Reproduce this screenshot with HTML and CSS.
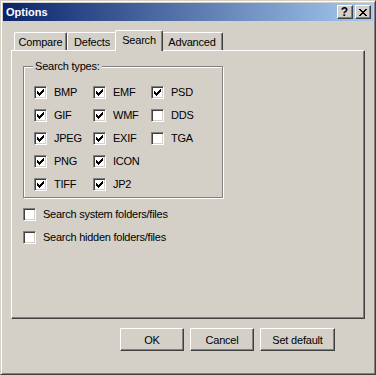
FILE: index.html
```html
<!DOCTYPE html>
<html lang="en">
<head>
    <meta charset="UTF-8">
    <title>Options</title>
    <link rel="stylesheet" href="styles.css">
</head>
<body>
    <div class="window">
        <div class="titlebar">
            <span class="title">Options</span>
            <div class="caption-btns">
                <span class="cap-btn help">?</span>
                <span class="cap-btn close">
                    <svg width="8" height="7" viewBox="0 0 8 7" shape-rendering="crispEdges">
                        <path d="M0 0h2v1h-2z M6 0h2v1h-2z M1 1h2v1h-2z M5 1h2v1h-2z M2 2h4v1h-4z M3 3h2v1h-2z M2 4h4v1h-4z M1 5h2v1h-2z M5 5h2v1h-2z M0 6h2v1h-2z M6 6h2v1h-2z" fill="#000"/>
                    </svg>
                </span>
            </div>
        </div>

        <div class="client">
            <div class="tabs">
                <div class="tab tab-compare">Compare</div>
                <div class="tab tab-defects">Defects</div>
                <div class="tab tab-search active">Search</div>
                <div class="tab tab-advanced">Advanced</div>
            </div>

            <div class="panel">
                <div class="group">
                    <div class="legend">Search types:</div>
                    <div class="types">
                        <label class="check"><span class="box checked"><svg width="11" height="11" viewBox="0 0 11 11" shape-rendering="crispEdges"><path d="M2 4h1v3h-1z M3 5h1v3h-1z M4 6h1v3h-1z M5 5h1v3h-1z M6 4h1v3h-1z M7 3h1v3h-1z M8 2h1v3h-1z"/></svg></span>BMP</label>
                        <label class="check"><span class="box checked"><svg width="11" height="11" viewBox="0 0 11 11" shape-rendering="crispEdges"><path d="M2 4h1v3h-1z M3 5h1v3h-1z M4 6h1v3h-1z M5 5h1v3h-1z M6 4h1v3h-1z M7 3h1v3h-1z M8 2h1v3h-1z"/></svg></span>GIF</label>
                        <label class="check"><span class="box checked"><svg width="11" height="11" viewBox="0 0 11 11" shape-rendering="crispEdges"><path d="M2 4h1v3h-1z M3 5h1v3h-1z M4 6h1v3h-1z M5 5h1v3h-1z M6 4h1v3h-1z M7 3h1v3h-1z M8 2h1v3h-1z"/></svg></span>JPEG</label>
                        <label class="check"><span class="box checked"><svg width="11" height="11" viewBox="0 0 11 11" shape-rendering="crispEdges"><path d="M2 4h1v3h-1z M3 5h1v3h-1z M4 6h1v3h-1z M5 5h1v3h-1z M6 4h1v3h-1z M7 3h1v3h-1z M8 2h1v3h-1z"/></svg></span>PNG</label>
                        <label class="check"><span class="box checked"><svg width="11" height="11" viewBox="0 0 11 11" shape-rendering="crispEdges"><path d="M2 4h1v3h-1z M3 5h1v3h-1z M4 6h1v3h-1z M5 5h1v3h-1z M6 4h1v3h-1z M7 3h1v3h-1z M8 2h1v3h-1z"/></svg></span>TIFF</label>

                        <label class="check"><span class="box checked"><svg width="11" height="11" viewBox="0 0 11 11" shape-rendering="crispEdges"><path d="M2 4h1v3h-1z M3 5h1v3h-1z M4 6h1v3h-1z M5 5h1v3h-1z M6 4h1v3h-1z M7 3h1v3h-1z M8 2h1v3h-1z"/></svg></span>EMF</label>
                        <label class="check"><span class="box checked"><svg width="11" height="11" viewBox="0 0 11 11" shape-rendering="crispEdges"><path d="M2 4h1v3h-1z M3 5h1v3h-1z M4 6h1v3h-1z M5 5h1v3h-1z M6 4h1v3h-1z M7 3h1v3h-1z M8 2h1v3h-1z"/></svg></span>WMF</label>
                        <label class="check"><span class="box checked"><svg width="11" height="11" viewBox="0 0 11 11" shape-rendering="crispEdges"><path d="M2 4h1v3h-1z M3 5h1v3h-1z M4 6h1v3h-1z M5 5h1v3h-1z M6 4h1v3h-1z M7 3h1v3h-1z M8 2h1v3h-1z"/></svg></span>EXIF</label>
                        <label class="check"><span class="box checked"><svg width="11" height="11" viewBox="0 0 11 11" shape-rendering="crispEdges"><path d="M2 4h1v3h-1z M3 5h1v3h-1z M4 6h1v3h-1z M5 5h1v3h-1z M6 4h1v3h-1z M7 3h1v3h-1z M8 2h1v3h-1z"/></svg></span>ICON</label>
                        <label class="check"><span class="box checked"><svg width="11" height="11" viewBox="0 0 11 11" shape-rendering="crispEdges"><path d="M2 4h1v3h-1z M3 5h1v3h-1z M4 6h1v3h-1z M5 5h1v3h-1z M6 4h1v3h-1z M7 3h1v3h-1z M8 2h1v3h-1z"/></svg></span>JP2</label>

                        <label class="check"><span class="box checked"><svg width="11" height="11" viewBox="0 0 11 11" shape-rendering="crispEdges"><path d="M2 4h1v3h-1z M3 5h1v3h-1z M4 6h1v3h-1z M5 5h1v3h-1z M6 4h1v3h-1z M7 3h1v3h-1z M8 2h1v3h-1z"/></svg></span>PSD</label>
                        <label class="check"><span class="box"></span>DDS</label>
                        <label class="check"><span class="box"></span>TGA</label>
                    </div>
                </div>

                <div class="options">
                    <label class="check"><span class="box"></span>Search system folders/files</label>
                    <label class="check"><span class="box"></span>Search hidden folders/files</label>
                </div>
            </div>

            <div class="buttons">
                <button class="btn btn-ok">OK</button>
                <button class="btn btn-cancel">Cancel</button>
                <button class="btn btn-default">Set default</button>
            </div>
        </div>
    </div>
</body>
</html>
```

FILE: styles.css
```css
body {
    margin: 0;
    padding: 0;
    font-family: "Liberation Sans", Arial, sans-serif;
    font-size: 11px;
    color: #000;
    background-color: #d4d0c8;
}

.window {
    width: 376px;
    height: 375px;
    box-sizing: border-box;
    background-color: #d4d0c8;
    border: 1px solid;
    border-color: #d4d0c8 #404040 #404040 #d4d0c8;
    box-shadow: inset 1px 1px 0 #fff, inset -1px -1px 0 #808080;
    padding: 2px;
}

.titlebar {
    height: 18px;
    display: flex;
    align-items: center;
    justify-content: space-between;
    padding: 0 2px 0 3px;
    background: linear-gradient(to right, #0a246a, #a6caf0);
}

    .titlebar .title {
        color: #fff;
        font-weight: bold;
        font-size: 11px;
    }

.caption-btns {
    display: flex;
    gap: 2px;
}

.cap-btn {
    width: 16px;
    height: 14px;
    box-sizing: border-box;
    display: flex;
    align-items: center;
    justify-content: center;
    background-color: #d4d0c8;
    border: 1px solid;
    border-color: #fff #404040 #404040 #fff;
    box-shadow: inset -1px -1px 0 #808080;
}

    .cap-btn.help {
        font-weight: bold;
        font-size: 12px;
        line-height: 12px;
        padding-right: 1px;
    }

    .cap-btn svg {
        display: block;
        margin-right: 1px;
    }

.client {
    padding: 9px 8px 0 8px;
}

.tabs {
    display: flex;
    align-items: flex-end;
    height: 20px;
    padding-left: 3px;
}

.tab {
    height: 18px;
    box-sizing: border-box;
    display: flex;
    align-items: center;
    justify-content: center;
    letter-spacing: -0.2px;
    background-color: #d4d0c8;
    border: 1px solid;
    border-bottom: none;
    border-color: #fff #404040 #404040 #fff;
    border-radius: 2px 2px 0 0;
    box-shadow: inset -1px 0 0 #808080;
    padding-top: 1px;
}

    .tab.active {
        height: 21px;
        margin: 0 -2px -1px -2px;
        position: relative;
        z-index: 1;
        padding-bottom: 3px;
    }

.tab-compare { width: 53px; }
.tab-defects { width: 50px; }
.tab-search { width: 48px; }
.tab-advanced { width: 62px; }

.panel {
    height: 269px;
    box-sizing: border-box;
    border: 1px solid;
    border-color: #fff #404040 #404040 #fff;
    box-shadow: inset -1px -1px 0 #808080;
    padding: 15px 0 0 11px;
}

.group {
    width: 200px;
    box-sizing: border-box;
    border: 1px solid #808080;
    box-shadow: inset 1px 1px 0 #fff, 1px 1px 0 #fff;
    padding-bottom: 6px;
}

    .group .legend {
        width: fit-content;
        margin: -7px 0 0 9px;
        padding: 0 2px;
        line-height: 13px;
        letter-spacing: -0.2px;
        background-color: #d4d0c8;
    }

.types {
    display: grid;
    grid-auto-flow: column;
    grid-template-rows: repeat(5, 13px);
    grid-template-columns: 59px 58px auto;
    row-gap: 10px;
    margin-top: 13px;
    padding-left: 10px;
}

.check {
    display: flex;
    align-items: center;
    gap: 7px;
    height: 13px;
    line-height: 13px;
    letter-spacing: -0.25px;
}

.box {
    width: 13px;
    height: 13px;
    flex: none;
    box-sizing: border-box;
    background-color: #fff;
    border: 1px solid;
    border-color: #808080 #fff #fff #808080;
    box-shadow: inset 1px 1px 0 #404040, inset -1px -1px 0 #d4d0c8;
}

    .box svg {
        display: block;
        fill: #000;
    }

.options {
    display: flex;
    flex-direction: column;
    gap: 10px;
    margin-top: 10px;
}

.buttons {
    display: flex;
    justify-content: flex-end;
    gap: 6px;
    margin: 9px 30px 0 0;
}

.btn {
    height: 23px;
    box-sizing: border-box;
    padding: 0;
    font-family: "Liberation Sans", Arial, sans-serif;
    font-size: 11px;
    letter-spacing: -0.2px;
    color: #000;
    background-color: #d4d0c8;
    border: 1px solid;
    border-color: #fff #404040 #404040 #fff;
    box-shadow: inset -1px -1px 0 #808080;
}

.btn-ok { width: 64px; }
.btn-cancel { width: 64px; }
.btn-default { width: 75px; }
```
